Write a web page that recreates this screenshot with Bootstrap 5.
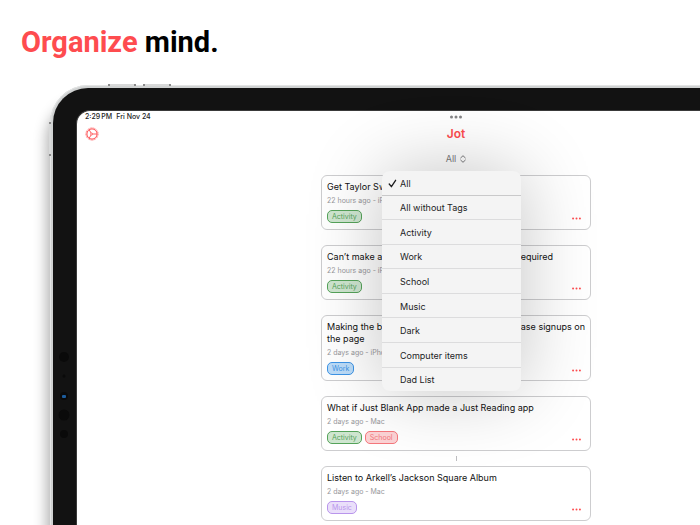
<!DOCTYPE html>
<html lang="en">
<head>
<meta charset="utf-8">
<meta name="viewport" content="width=device-width, initial-scale=1">
<title>Jot – Organize mind.</title>
<link href="https://cdn.jsdelivr.net/npm/bootstrap@5.3.0/dist/css/bootstrap.min.css" rel="stylesheet">
<style>
  body { font-family: Inter, "Liberation Sans", sans-serif; background: #fff; color: #1c1c1e; }
  .promo { height: 100vh; }
  .promo-title { font: 700 29px/36px Roboto, sans-serif; color: #000; padding: 24px 21px 0; height: 85px; }
  .promo-title span, .jot-red { color: #fe4c4f; }
  .tablet { margin: 0 -158px 0 50px; background: #121212; border: solid #d0d2d2; border-width: 3px 0 0 3px;
    border-top-left-radius: 38px; padding: 22px 23px 0; outline: 1px solid #e4e5e5; outline-offset: -1px;
    box-shadow: -3px 16px 14px rgba(0,0,0,.32); }
  .side-key { position: absolute; background: #d8d9d9; border: solid #8a8a8a; }
  .key-top { height: 2px; width: 28px; top: -4px; border-width: 0 2px; }
  .key-left { width: 2px; height: 34px; left: -4px; top: 34px; border-width: 2px 0; }
  .lens { position: absolute; border-radius: 50%; background: #0a0a0a; transform: translate(-50%, -50%); left: 11px; }
  .screen { background: #fff; border-top-left-radius: 14px; border: solid #3a3a3a; border-width: 1px 0 0 1px; }
  .status-bar { font-size: 7px; line-height: 12px; padding: 0 8px; font-weight: 500; }
  .app-head { height: 21px; padding-left: 8px; }
  .plain { border: 0; background: none; padding: 0; }
  .app-title { font-size: 12px; line-height: 21px; font-weight: 600; }
  .filter { font-size: 9px; line-height: 14px; color: #7b7b7d; }
  .filter-row { height: 31px; padding-top: 8px; }
  .filter-menu { position: absolute; z-index: 5; top: 27px; width: 139px; height: 220px; left: calc(50% - 74px);
    background: #f4f4f4; border-radius: 8px; box-shadow: 0 0 76px rgba(0,0,0,.24); }
  .filter-menu li + li { border-top: 1px solid #dcdcdd; }
  .filter-menu li:nth-child(2) { border-top-color: #c9c9ca; }
  .filter-menu button { font-size: 9px; line-height: 12px; color: #1c1c1e; padding: 2px 0 0 6px; }
  .tick { width: 12px; }
  .notes { width: 270px; }
  .note { border: 1px solid #cdcdcf; border-radius: 6px; padding: 5px 5px 6px; }
  .note h2 { font-size: 9px; line-height: 12px; font-weight: 400; color: #111; margin: 0; }
  .note.two-line { padding-bottom: 5px; }
  .note-meta { font-size: 7px; line-height: 10px; color: #98989b; margin: 3px 0 4px; }
  .tags { gap: 3px; }
  .pill { font-size: 7px; line-height: 11px; border: 1px solid; border-radius: 5px; padding: 0 4px; }
  .pill-green { color: #55a35a; background: #cfe6d0; }
  .pill-blue { color: #3d94e6; background: #bcdcf8; }
  .pill-red { color: #f5777c; background: #fcd3d5; }
  .pill-violet { color: #b995ec; background: #eadffa; }
  .joint { height: 15px; }
  .joint i { width: 1px; height: 5px; background: #bdbdc0; }
</style>
<script src="https://cdn.jsdelivr.net/npm/bootstrap@5.3.0/dist/js/bootstrap.bundle.min.js"></script>
</head>
<body>
<main class="promo overflow-hidden d-flex flex-column">
  <h1 class="promo-title m-0 flex-shrink-0"><span>Organize</span> mind.</h1>

  <div class="tablet position-relative flex-grow-1 d-flex flex-column">
    <div class="side-key key-top" style="left:55px"></div>
    <div class="side-key key-top" style="left:90px"></div>
    <div class="side-key key-left"></div>
    <div class="lens" style="width:10px;height:10px;top:269px"></div>
    <div class="lens" style="width:3px;height:3px;top:288px"></div>
    <div class="lens d-flex" style="width:8px;height:8px;top:308px">
      <svg class="m-auto" width="4" height="3" viewBox="0 0 4 3" aria-hidden="true"><rect width="4" height="3" rx="1" fill="#1c5c9c"/></svg>
    </div>
    <div class="lens" style="width:11px;height:11px;top:327px"></div>
    <div class="lens" style="width:8px;height:8px;top:346px"></div>

    <div class="screen flex-grow-1">
      <div class="status-bar d-flex position-relative">
        <span>2:29&#8239;PM</span><span class="ms-1">Fri Nov 24</span>
        <svg class="position-absolute top-50 start-50 translate-middle" width="12" height="4" viewBox="0 0 12 4" fill="#858587" aria-hidden="true"><circle cx="1.5" cy="2" r="1.5"/><circle cx="6" cy="2" r="1.5"/><circle cx="10.5" cy="2" r="1.5"/></svg>
      </div>
      <header class="app-head position-relative d-flex align-items-center jot-red">
        <button class="plain jot-red d-flex" type="button" aria-label="Settings">
          <svg width="14" height="14" viewBox="0 0 14 14" fill="none" stroke="currentColor" aria-hidden="true">
            <circle cx="7" cy="7" r="6.1" stroke-width=".9" stroke-dasharray="1.1 .5" opacity=".75"/>
            <circle cx="7" cy="7" r="5.1" stroke-width="1"/>
            <circle cx="6.6" cy="7" r="1" stroke-width=".8"/>
            <path d="M7.6 7H12M6.1 6.100 4.200 2.800M6.100 7.900 4.200 11.200" stroke-width=".9"/>
          </svg>
        </button>
        <div class="app-title position-absolute top-0 start-0 w-100 text-center pe-none">Jot</div>
      </header>
      <div class="filter-row position-relative d-flex justify-content-center align-items-start">
        <button class="plain filter d-inline-flex align-items-center gap-1" type="button" aria-haspopup="menu" aria-expanded="true">All
          <svg width="6" height="8" viewBox="0 0 6 8" fill="none" stroke="currentColor" stroke-width="1" stroke-linecap="round" stroke-linejoin="round" aria-hidden="true"><path d="M.7 2.900 3 .7l2.300 2.200M.7 5.100 3 7.300l2.300-2.200"/></svg>
        </button>
        <ul class="filter-menu list-unstyled m-0 d-flex flex-column">
          <li class="flex-fill d-flex"><button class="border-0 bg-transparent w-100 d-flex align-items-center" type="button"><span class="tick d-flex"><svg width="9" height="9" viewBox="0 0 9 9" fill="none" stroke="#1c1c1e" stroke-width="1.3" stroke-linecap="round" stroke-linejoin="round" aria-hidden="true"><path d="M1.200 5 3.400 7.700 7.600 1.300"/></svg></span>All</button></li>
          <li class="flex-fill d-flex"><button class="border-0 bg-transparent w-100 d-flex align-items-center" type="button"><span class="tick"></span>All without Tags</button></li>
          <li class="flex-fill d-flex"><button class="border-0 bg-transparent w-100 d-flex align-items-center" type="button"><span class="tick"></span>Activity</button></li>
          <li class="flex-fill d-flex"><button class="border-0 bg-transparent w-100 d-flex align-items-center" type="button"><span class="tick"></span>Work</button></li>
          <li class="flex-fill d-flex"><button class="border-0 bg-transparent w-100 d-flex align-items-center" type="button"><span class="tick"></span>School</button></li>
          <li class="flex-fill d-flex"><button class="border-0 bg-transparent w-100 d-flex align-items-center" type="button"><span class="tick"></span>Music</button></li>
          <li class="flex-fill d-flex"><button class="border-0 bg-transparent w-100 d-flex align-items-center" type="button"><span class="tick"></span>Dark</button></li>
          <li class="flex-fill d-flex"><button class="border-0 bg-transparent w-100 d-flex align-items-center" type="button"><span class="tick"></span>Computer items</button></li>
          <li class="flex-fill d-flex"><button class="border-0 bg-transparent w-100 d-flex align-items-center" type="button"><span class="tick"></span>Dad List</button></li>
        </ul>
      </div>

      <svg class="d-none" aria-hidden="true"><symbol id="dots" viewBox="0 0 10 3"><circle cx="1.2" cy="1.5" r="1.1"/><circle cx="5" cy="1.5" r="1.1"/><circle cx="8.8" cy="1.5" r="1.1"/></symbol></svg>

      <section class="notes mx-auto">
        <article class="note">
          <h2>Get Taylor Sw</h2>
          <p class="note-meta">22 hours ago - iP</p>
          <div class="tags d-flex align-items-center"><span class="pill pill-green">Activity</span>
            <button class="plain jot-red ms-auto me-1 pt-1 d-flex" type="button" aria-label="More"><svg width="9" height="3" fill="currentColor"><use href="#dots"/></svg></button></div>
        </article>
        <div class="joint d-flex"><i class="m-auto"></i></div>
        <article class="note">
          <h2 class="d-flex"><span>Can’t make a</span><span class="ms-auto me-4 pe-2">required</span></h2>
          <p class="note-meta">22 hours ago - iP</p>
          <div class="tags d-flex align-items-center"><span class="pill pill-green">Activity</span>
            <button class="plain jot-red ms-auto me-1 pt-1 d-flex" type="button" aria-label="More"><svg width="9" height="3" fill="currentColor"><use href="#dots"/></svg></button></div>
        </article>
        <div class="joint d-flex"><i class="m-auto"></i></div>
        <article class="note two-line">
          <h2><span class="d-flex"><span>Making the b</span><span class="ms-auto">ase signups on</span></span>the page</h2>
          <p class="note-meta">2 days ago - iPho</p>
          <div class="tags d-flex align-items-center"><span class="pill pill-blue">Work</span>
            <button class="plain jot-red ms-auto me-1 pt-1 d-flex" type="button" aria-label="More"><svg width="9" height="3" fill="currentColor"><use href="#dots"/></svg></button></div>
        </article>
        <div class="joint d-flex"><i class="m-auto"></i></div>
        <article class="note">
          <h2>What if Just Blank App made a Just Reading app</h2>
          <p class="note-meta">2 days ago - Mac</p>
          <div class="tags d-flex align-items-center"><span class="pill pill-green">Activity</span><span class="pill pill-red">School</span>
            <button class="plain jot-red ms-auto me-1 pt-1 d-flex" type="button" aria-label="More"><svg width="9" height="3" fill="currentColor"><use href="#dots"/></svg></button></div>
        </article>
        <div class="joint d-flex"><i class="m-auto"></i></div>
        <article class="note">
          <h2>Listen to Arkell’s Jackson Square Album</h2>
          <p class="note-meta">2 days ago - Mac</p>
          <div class="tags d-flex align-items-center"><span class="pill pill-violet">Music</span>
            <button class="plain jot-red ms-auto me-1 pt-1 d-flex" type="button" aria-label="More"><svg width="9" height="3" fill="currentColor"><use href="#dots"/></svg></button></div>
        </article>
        <div class="joint d-flex"><i class="m-auto"></i></div>
      </section>
    </div>
  </div>
</main>
</body>
</html>
